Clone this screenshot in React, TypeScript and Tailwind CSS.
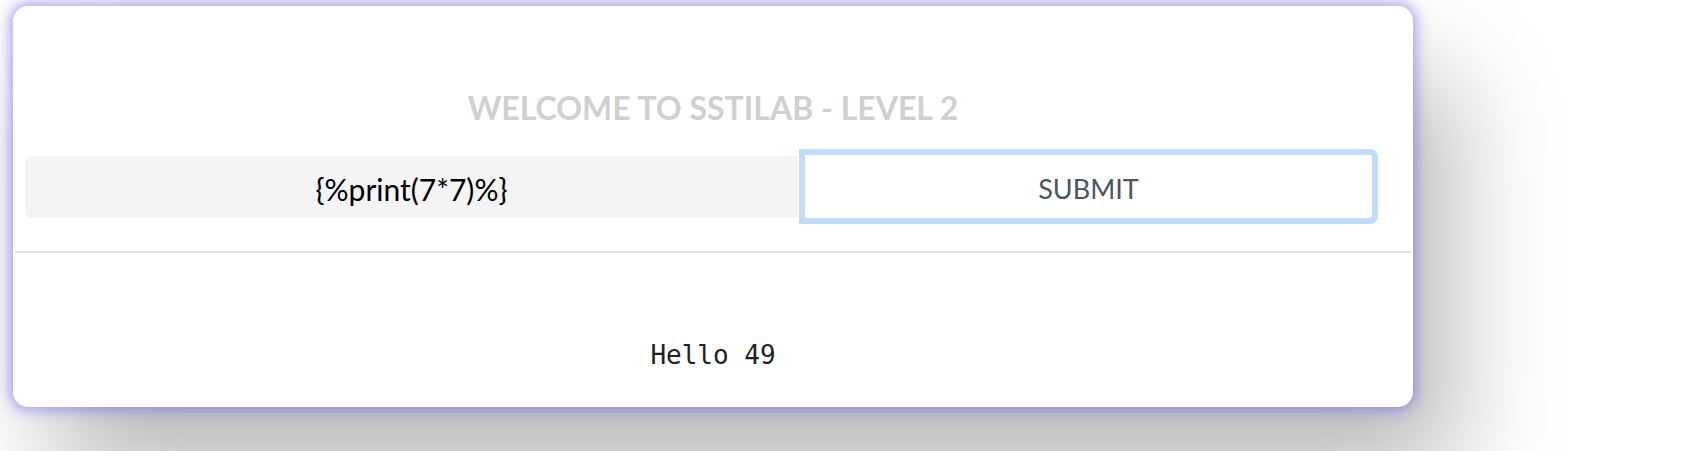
import React from "react";

export default function App() {
  return (
    <div className="w-[1681px] h-[451px] overflow-hidden bg-white pl-[13px] pt-[6px]">
      <div className="w-[1400px] h-[401px] rounded-[15px] bg-white shadow-[0_0_14px_3px_rgba(120,110,235,0.65),40px_70px_110px_rgba(0,0,0,0.28)] flex flex-col">
        <h1 className="mt-[82px] h-[40px] leading-[40px] text-center text-[32px] font-bold text-[#d0d0d0] font-['Lato',sans-serif]">
          WELCOME TO SSTILAB - LEVEL 2
        </h1>
        <div className="mt-[21px] ml-[12px] flex items-center font-['Lato',sans-serif]">
          <div className="w-[773px] h-[62px] bg-[#f4f4f4] rounded-l-md flex items-center justify-center pt-[5px] text-[30px] text-black">
            {"{%print(7*7)%}"}
          </div>
          <button className="ml-[1px] w-[579px] h-[75px] border-[6px] border-[#bfdcfd] rounded-r-lg bg-white flex items-center justify-center pt-[5px] text-[27px] text-[#4b5563]">
            SUBMIT
          </button>
        </div>
        <div className="mt-[27px] mx-[2px] h-[2px] bg-[#e2e2e2]" />
        <div className="mt-[87px] h-[30px] leading-[30px] text-center text-[26px] text-[#222] font-['DejaVu_Sans_Mono',monospace]">
          Hello 49
        </div>
      </div>
    </div>
  );
}
